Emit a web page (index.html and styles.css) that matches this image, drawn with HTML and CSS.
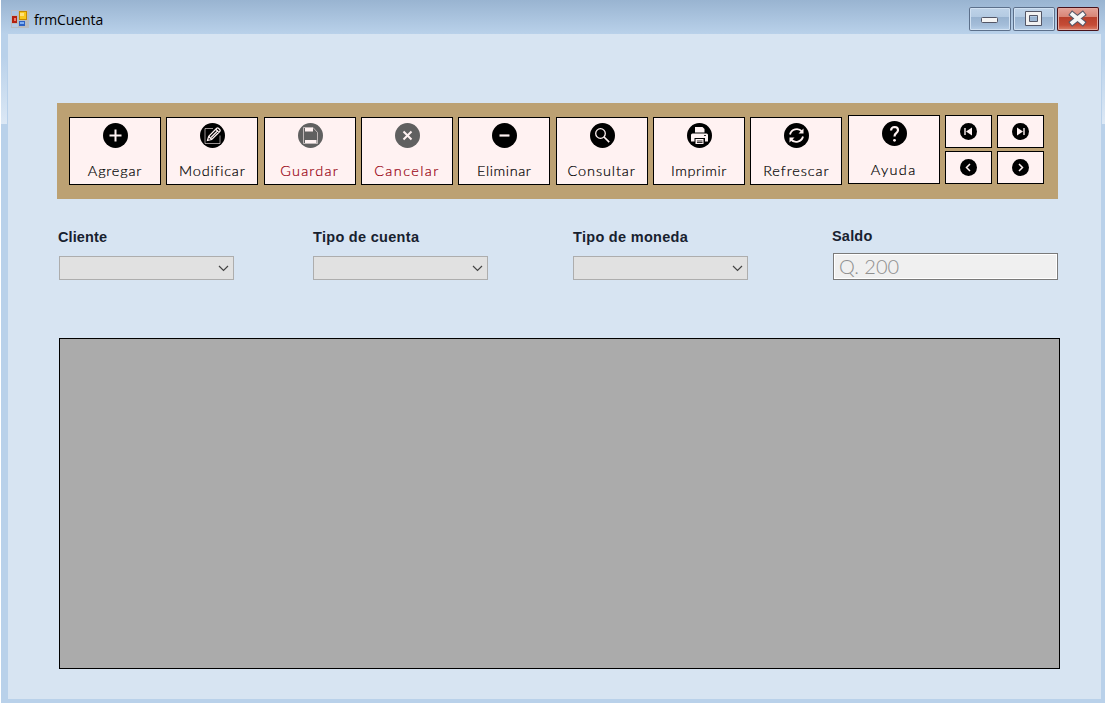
FILE: index.html
```html
<!DOCTYPE html>
<html lang="es">
<head>
<meta charset="utf-8">
<title>frmCuenta</title>
<link rel="stylesheet" href="styles.css">
</head>
<body>
<div class="window">
  <header class="titlebar">
    <svg class="app-icon" width="18" height="18" viewBox="0 0 18 18" shape-rendering="crispEdges">
      <rect width="18" height="18" fill="#b9bcc0"/>
      <rect x="1" y="1" width="6" height="4" fill="#aac3e2"/>
      <rect x="1" y="14" width="6" height="3" fill="#b4cae6"/>
      <rect x="1" y="6" width="5" height="7" fill="#b3200e"/>
      <rect x="3" y="8" width="2" height="3" fill="#ef7a66"/>
      <rect x="8" y="1" width="8" height="9" fill="#c48a00"/>
      <rect x="9" y="2" width="6" height="7" fill="#f8c81c"/>
      <rect x="9" y="3" width="4" height="3" fill="#ffe27a"/>
      <rect x="8" y="11" width="6" height="5" fill="#2d62c4"/>
      <rect x="9" y="12" width="4" height="2" fill="#7fb0f5"/>
    </svg>
    <span class="title">frmCuenta</span>
    <div class="controls">
      <span class="control"><svg width="42" height="24" viewBox="0 0 42 24"><rect x="12.500" y="10.500" width="16" height="5" rx="1" fill="#f4f4f4" stroke="#535666"/></svg></span>
      <span class="control"><svg width="42" height="24" viewBox="0 0 42 24"><path d="M12.500 4.500h16v14h-16zM16.500 8.500v6h8v-6z" fill="#f1f1f1" fill-rule="evenodd" stroke="#535666" stroke-linejoin="round"/></svg></span>
      <span class="control close"><svg width="42" height="24" viewBox="0 0 42 24"><path d="M15.500 7.500l10 8M25.500 7.500l-10 8" stroke="#535666" stroke-width="6" stroke-linecap="square"/><path d="M15.500 7.500l10 8M25.500 7.500l-10 8" stroke="#f6f6f6" stroke-width="4" stroke-linecap="square"/></svg></span>
    </div>
  </header>
  <main class="client">
    <nav class="toolbar">
      <button class="tool"><svg class="icon" viewBox="0 0 25 25"><circle class="disc" cx="12.500" cy="12.500" r="12.500"/><path class="line" stroke-width="2" d="M6.500 12.500h12M12.500 6.500v12"/></svg><span class="agregar">Agregar</span></button>
      <button class="tool"><svg class="icon" viewBox="0 0 25 25"><circle class="disc" cx="12.500" cy="12.500" r="12.500"/><path class="line dim" d="M13 5.500H5v15h15v-8"/><path class="line" stroke-width="1.200" d="M7.500 17.500l1.200-4.200 8-8q1-.8 2 .2l1 1q1 1 0 2l-8 8zM9 13.500l2.500 3M11 14.500l7-7M16 6.500l3 3"/></svg><span class="modificar">Modificar</span></button>
      <button class="tool disabled"><svg class="icon" viewBox="0 0 25 25"><circle class="disc" cx="12.500" cy="12.500" r="12.500"/><path class="line dim" d="M5.500 4.500H15l4.500 5v11h-14z"/><path class="solid" d="M7 5h8v3.500H7zM7 17h11.500v3H7z"/></svg><span class="guardar">Guardar</span></button>
      <button class="tool disabled"><svg class="icon" viewBox="0 0 25 25"><circle class="disc" cx="12.500" cy="12.500" r="12.500"/><path class="line" stroke-width="2" d="M8.500 8.500l8 8M16.500 8.500l-8 8"/></svg><span class="cancelar">Cancelar</span></button>
      <button class="tool"><svg class="icon" viewBox="0 0 25 25"><circle class="disc" cx="12.500" cy="12.500" r="12.500"/><path class="line" stroke-width="2.200" d="M7.500 12.500h10"/></svg><span class="eliminar">Eliminar</span></button>
      <button class="tool"><svg class="icon" viewBox="0 0 25 25"><circle class="disc" cx="12.500" cy="12.500" r="12.500"/><circle class="line" stroke-width="1.300" cx="10.500" cy="10.500" r="4.800"/><path class="line" stroke-width="1.700" d="M14 14l5.200 5.200"/></svg><span class="consultar">Consultar</span></button>
      <button class="tool"><svg class="icon" viewBox="0 0 25 25"><circle class="disc" cx="12.500" cy="12.500" r="12.500"/><path class="solid" d="M8 4h7.500l2 2v3.500H8zM5.500 10.500h14q1.500 0 1.500 1.500v6.500h-3V15H7.500v3.500H4V12q0-1.500 1.500-1.500zM8.500 16h8v5h-8z"/><path d="M10 18h5.500M10 19.500h5.500M17 12.500h2" stroke="#000" stroke-width=".8"/></svg><span class="imprimir">Imprimir</span></button>
      <button class="tool"><svg class="icon" viewBox="0 0 25 25"><circle class="disc" cx="12.500" cy="12.500" r="12.500"/><path class="line" stroke-width="1.900" d="M6 11.500A7 7 0 0 1 18 8.500M19 13.500A7 7 0 0 1 7 16.500"/><path class="solid" d="M19.500 5.500v5h-5zM5.500 19.500v-5h5z"/></svg><span class="refrescar">Refrescar</span></button>
      <button class="tool tool-help"><svg class="icon" viewBox="0 0 25 25"><circle class="disc" cx="12.500" cy="12.500" r="12.500"/><path class="line" stroke-width="2.200" d="M9 9.500q.3-3.500 3.700-3.500 3.400.1 3.300 3.300-.1 1.800-1.900 2.900-1.600 1-1.600 3.300"/><circle class="solid" cx="12.500" cy="19.300" r="1.400"/></svg><span class="ayuda">Ayuda</span></button>
      <div class="pager">
        <button class="nav"><svg viewBox="0 0 17 17"><circle class="disc" cx="8.500" cy="8.500" r="8.500"/><path class="line" stroke-width="1.400" d="M5 5v7"/><path class="solid" d="M12 4.500v8l-6-4z"/></svg></button>
        <button class="nav"><svg viewBox="0 0 17 17"><circle class="disc" cx="8.500" cy="8.500" r="8.500"/><path class="line" stroke-width="1.400" d="M12 5v7"/><path class="solid" d="M5 4.500v8l6-4z"/></svg></button>
        <button class="nav"><svg viewBox="0 0 17 17"><circle class="disc" cx="8.500" cy="8.500" r="8.500"/><path class="line" stroke-width="1.500" d="M10 5L6.500 8.500 10 12"/></svg></button>
        <button class="nav"><svg viewBox="0 0 17 17"><circle class="disc" cx="8.500" cy="8.500" r="8.500"/><path class="line" stroke-width="1.500" d="M7 5l3.500 3.500L7 12"/></svg></button>
      </div>
    </nav>
    <section class="fields">
      <div class="field"><label class="cliente">Cliente</label><div class="combo"><svg width="11" height="7" viewBox="0 0 11 7"><path d="M1 1l4.500 4.500L10 1"/></svg></div></div>
      <div class="field"><label class="cuenta">Tipo de cuenta</label><div class="combo"><svg width="11" height="7" viewBox="0 0 11 7"><path d="M1 1l4.500 4.500L10 1"/></svg></div></div>
      <div class="field"><label class="moneda">Tipo de moneda</label><div class="combo"><svg width="11" height="7" viewBox="0 0 11 7"><path d="M1 1l4.500 4.500L10 1"/></svg></div></div>
      <div class="field balance"><label class="saldo">Saldo</label><div class="textbox"><span>Q. 200</span></div></div>
    </section>
    <section class="data-grid"></section>
  </main>
</div>
</body>
</html>
```
FILE: styles.css
```css
* { box-sizing: border-box; }
body { margin: 0; background: #fff; }

.window {
  width: 1104px;
  height: 703px;
  margin-left: 1px;
  padding: 0 4px 4px 7px;
  background:
    linear-gradient(#99b4d1, #b9d1ea) 0 0 / 100% 34px no-repeat,
    linear-gradient(#b9d1ea, #b9d1ea 25%, #dce8f5) 0 34px / 6px 90px no-repeat,
    linear-gradient(#b9d1ea, #b9d1ea 25%, #dce8f5) 100% 34px / 3px 90px no-repeat,
    #b9d1ea;
}

.titlebar {
  display: flex;
  height: 34px;
  padding: 7px 2px 0 3px;
}
.app-icon { margin-top: 3px; }
.title {
  margin-left: 5px;
  font: 14px/26px "Open Sans", "Noto Sans", sans-serif;
  letter-spacing: -0.1px;
  color: #000;
}
.controls { display: flex; gap: 2px; margin-left: auto; }
.control {
  width: 42px;
  height: 24px;
  border-radius: 2px;
  background: linear-gradient(#c0d4e9, #b3cae2 42%, #98b3d0 43%, #a4bdd9 75%, #bbd3eb);
  box-shadow: inset 0 0 0 1px #5c708b, inset 0 0 0 2px #d1e1f2;
}
.control svg { display: block; }
.close {
  background: linear-gradient(#e5a79d, #d88475 42%, #b8402c 43%, #c54b36 75%, #df8c75);
  box-shadow: inset 0 0 0 1px #47121b, inset 0 0 0 2px #e5a89e;
}

.client {
  height: 665px;
  padding: 69px 0 0 49px;
  background: #d7e4f2;
}

.toolbar {
  display: flex;
  gap: 5.333px;
  width: 1001px;
  height: 96px;
  padding: 12px 0 0 12px;
  background: #bca173;
}
.tool, .nav {
  margin: 0;
  border: 1px solid #000;
  border-radius: 0;
  background: #fff2f2;
}
.tool {
  display: flex;
  flex: none;
  flex-direction: column;
  align-items: center;
  width: 92px;
  height: 68px;
  margin-top: 2px;
  padding: 5px 0 0;
  font: 300 14.5px/20px Lato, "Open Sans", sans-serif;
  color: #000;
  white-space: nowrap;
}
.tool-help { height: 69px; margin-top: 0; }
.tool span { margin-top: 13px; -webkit-text-stroke: .2px currentColor; }
.tool-help span { margin-top: 14px; }
.icon { flex: none; width: 25px; height: 25px; margin-left: 1px; }
.disc { fill: #000; }
.line { fill: none; stroke: #fff2f2; }
.dim { opacity: .6; }
.solid { fill: #fff2f2; }
.disabled { color: #980010; }
.disabled .disc { fill: #606060; }

.agregar { letter-spacing: .8px; }
.modificar { letter-spacing: .8px; }
.guardar { letter-spacing: 1.2px; }
.cancelar { letter-spacing: 1.4px; }
.eliminar { letter-spacing: .6px; }
.consultar { letter-spacing: .9px; }
.imprimir { letter-spacing: .5px; }
.refrescar { letter-spacing: .9px; }
.ayuda { letter-spacing: 1.3px; }

.pager {
  display: grid;
  grid-template-columns: 47px 47px;
  grid-template-rows: 33px 33px;
  gap: 3px 5px;
}
.nav {
  display: flex;
  align-items: flex-start;
  padding: 7px 0 0 14px;
}
.nav svg { flex: none; width: 17px; height: 17px; }

.fields {
  display: grid;
  grid-template-columns: 254px 260px 260px 225px;
  height: 139px;
  padding: 28px 0 0 2px;
}
.field label {
  display: block;
  height: 29px;
  margin-left: -1px;
  font: bold 14.5px/20px "Liberation Sans", Arial, sans-serif;
  color: #17212f;
  white-space: nowrap;
}
.cliente { letter-spacing: .1px; }
.field .cuenta, .field .moneda { margin-left: 0; letter-spacing: .3px; }
.saldo { letter-spacing: .2px; }
.combo {
  display: flex;
  align-items: center;
  justify-content: flex-end;
  width: 175px;
  height: 24px;
  padding-right: 4px;
  border: 1px solid #adadad;
  background: #e1e1e1;
}
.combo path { fill: none; stroke: #444; stroke-width: 1.2; }
.balance { margin-top: -1px; }
.balance label { height: 27px; }
.textbox {
  width: 225px;
  height: 27px;
  padding-left: 5px;
  border: 1px solid #7a7a7a;
  background: #f0f0f0;
  box-shadow: inset 0 0 0 1px #fff;
  font: 300 20px/25px Lato, "Open Sans", sans-serif;
  letter-spacing: 0;
  color: #8f8f8f;
}

.data-grid {
  width: 1001px;
  height: 331px;
  margin-left: 2px;
  border: 1px solid #000;
  background: #ababab;
}
```
